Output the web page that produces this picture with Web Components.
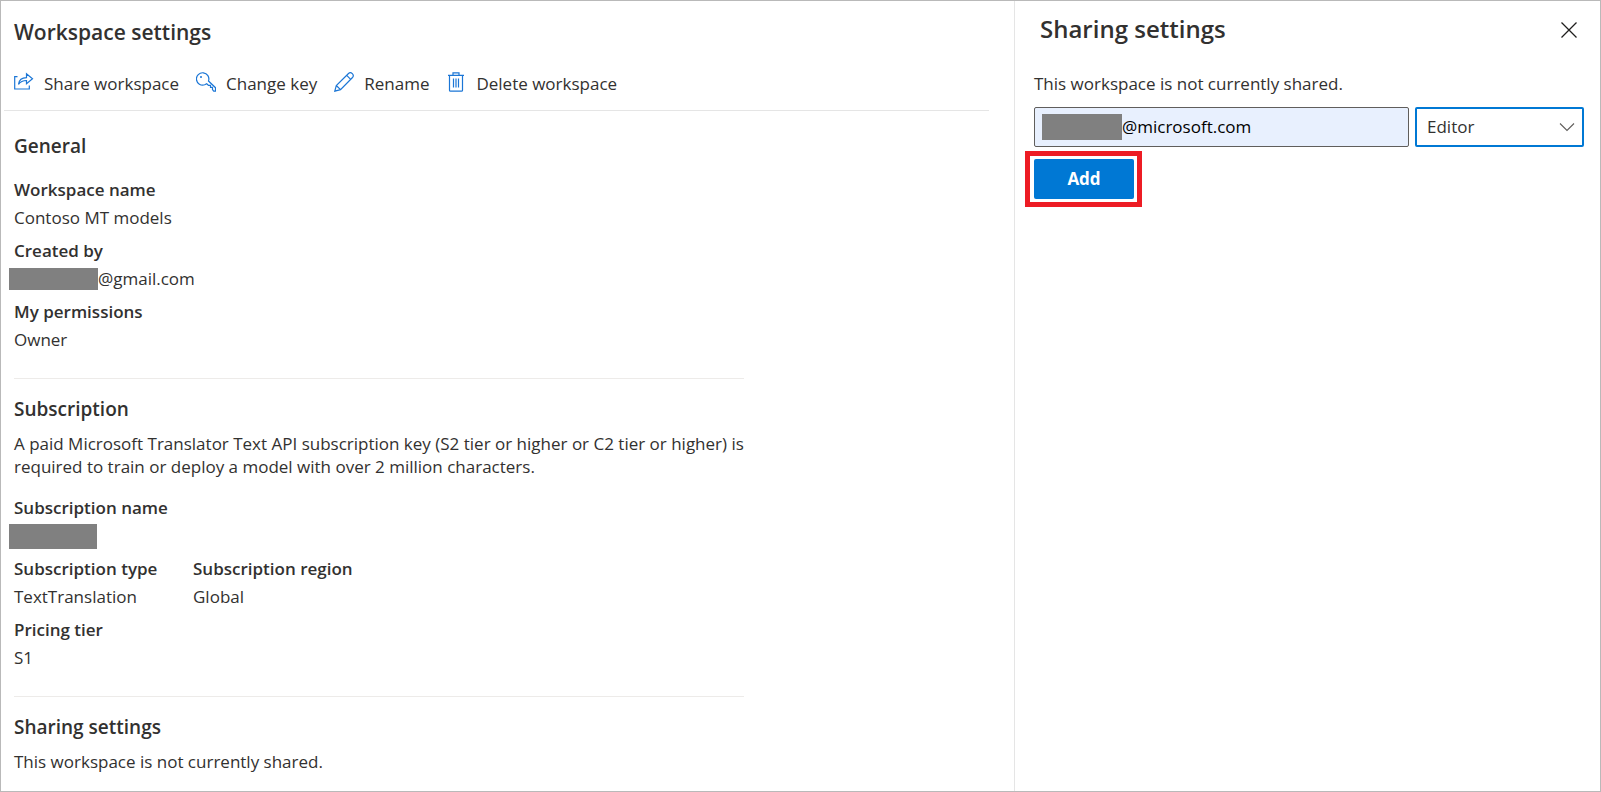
<!DOCTYPE html>
<html lang="en">
<head>
<meta charset="utf-8">
<title>Workspace settings</title>
<style>
html, body { margin: 0; height: 100%; }
body { font: 17px/24px "Open Sans", "Noto Sans", sans-serif; color: #323130; background: #fff; }
</style>
</head>
<body>
<settings-page>
  <workspace-settings slot="main"></workspace-settings>
  <sharing-panel slot="side"></sharing-panel>
</settings-page>

<script>
const define = (name, html) => {
  const template = document.createElement('template');
  template.innerHTML = html;
  customElements.define(name, class extends HTMLElement {
    constructor() {
      super();
      this.attachShadow({ mode: 'open' }).append(template.content.cloneNode(true));
    }
  });
};

define('settings-page', `
<style>
:host { display: grid; grid-template-columns: minmax(0, 1fr) 586px; min-height: 100%; box-sizing: border-box; border: 1px solid #b9b9b9; }
</style>
<slot name="main"></slot>
<slot name="side"></slot>`);

define('command-button', `
<style>
:host { display: block; }
button { display: flex; align-items: flex-start; gap: 10px; margin: 0; padding: 0; border: 0; background: none; font: inherit; line-height: 28px; color: inherit; white-space: nowrap; cursor: pointer; }
::slotted(svg) { width: 20px; height: 20px; margin-top: 2px; flex: none; fill: none; stroke: #1b76d6; stroke-width: 1.2; }
</style>
<button type="button"><slot name="icon"></slot><slot></slot></button>`);

define('redacted-block', `
<style>
:host { display: block; flex: none; background: #808080; }
</style>`);

define('info-field', `
<style>
:host { display: block; margin-bottom: 5px; }
dl, dd { margin: 0; }
dt { font-weight: 600; line-height: 28px; }
dd { display: flex; align-items: center; height: 28px; line-height: 28px; }
</style>
<dl><dt><slot name="label"></slot></dt><dd><slot></slot></dd></dl>`);

define('settings-section', `
<style>
:host { display: block; max-width: 730px; padding-bottom: 19px; margin-bottom: 16px; border-bottom: 1px solid #edebe9; }
:host(:last-of-type) { border-bottom: 0; padding: 0; margin: 0; }
h2 { margin: 0; font-size: 19px; line-height: 28px; font-weight: 600; }
</style>
<h2><slot name="title"></slot></h2>
<slot></slot>`);

define('workspace-settings', `
<style>
:host { display: block; padding: 16px 25px 8px 3px; }
h1 { margin: 0 10px; font-size: 21px; line-height: 30px; font-weight: 600; }
nav { display: flex; gap: 17px; padding: 23px 10px 12px; border-bottom: 1px solid #e5e5e5; }
main { padding: 21px 10px 0; }
p { margin: 9px 0 0; line-height: 23px; }
.fields { margin-top: 16px; }
.pair { display: grid; grid-template-columns: 179px 1fr; }
redacted-block { margin-left: -5px; width: 88px; height: 25px; }
redacted-block.user { width: 89px; height: 22px; }
</style>
<h1>Workspace settings</h1>
<nav>
  <command-button>
    <svg slot="icon" viewBox="0 0 20 20"><path d="M3.500 4.700H.7v12.300h14.600v-3.500M4.500 12.300c.500-4 3.500-6.700 8-6.700V1.700l6 5-6 5V8.500c-3.500 0-6 1-8 3.800z"/></svg>
    Share workspace
  </command-button>
  <command-button>
    <svg slot="icon" viewBox="0 0 20 20"><path d="M10.700 11.700 12.500 13.400h2v2h2v2.200l1.200 1.600h1.800v-3.500l-7-6.700a6.200 6.200 0 1 0-3.800 3.800z"/><circle cx="5" cy="5" r="1" fill="#1b76d6" stroke="none"/></svg>
    Change key
  </command-button>
  <command-button>
    <svg slot="icon" viewBox="0 0 20 20"><path d="M.8 19.200 2.300 13.500 14.500 1.500c2.500-2.300 6.300 1.500 4 4L6.500 17.700zM2.300 13.500l4.200 4.200M12.700 3.300l4 4"/></svg>
    Rename
  </command-button>
  <command-button>
    <svg slot="icon" viewBox="0 0 20 20"><path d="M2 3.300h16M7 3V.8h6V3M3.500 3.500v14.700q0 1 1 1h11q1 0 1-1V3.500M7.500 6.500v9M10 6.500v9M12.500 6.500v9"/></svg>
    Delete workspace
  </command-button>
</nav>
<main>
  <settings-section>
    <span slot="title">General</span>
    <div class="fields">
      <info-field><span slot="label">Workspace name</span>Contoso MT models</info-field>
      <info-field><span slot="label">Created by</span><redacted-block class="user"></redacted-block>@gmail.com</info-field>
      <info-field><span slot="label">My permissions</span>Owner</info-field>
    </div>
  </settings-section>
  <settings-section>
    <span slot="title">Subscription</span>
    <p>A paid Microsoft Translator Text API subscription key (S2 tier or higher or C2 tier or higher) is required to train or deploy a model with over 2 million characters.</p>
    <div class="fields">
      <info-field><span slot="label">Subscription name</span><redacted-block></redacted-block></info-field>
      <div class="pair">
        <info-field><span slot="label">Subscription type</span>TextTranslation</info-field>
        <info-field><span slot="label">Subscription region</span>Global</info-field>
      </div>
      <info-field><span slot="label">Pricing tier</span>S1</info-field>
    </div>
  </settings-section>
  <settings-section>
    <span slot="title">Sharing settings</span>
    <p>This workspace is not currently shared.</p>
  </settings-section>
</main>`);

define('sharing-panel', `
<style>
:host { display: block; border-left: 1px solid #e5e5e5; padding: 12px 16px 0 19px; }
header { display: flex; justify-content: space-between; align-items: center; padding: 0 6px; }
h2 { margin: 0; font-size: 24px; line-height: 32px; font-weight: 600; }
.close { display: flex; margin: 0; padding: 2px 0 0; border: 0; background: none; color: #201f1e; cursor: pointer; }
svg { fill: none; stroke: currentColor; }
p { margin: 27px 0 11px; }
form { display: grid; grid-template-columns: 1fr 169px; gap: 12px 6px; }
.email { display: flex; align-items: center; box-sizing: border-box; height: 40px; padding: 0 7px; border: 1px solid #605e5c; border-radius: 2px; background: #e8f0fe; }
redacted-block { width: 80px; height: 26px; }
input { flex: 1; min-width: 0; margin: 0; padding: 0; border: 0; outline: 0; background: none; font: inherit; color: #000; }
.role { display: grid; align-items: center; }
.role > * { grid-area: 1 / 1; }
.role svg { justify-self: end; margin-right: 9px; pointer-events: none; color: #605e5c; }
select { appearance: none; box-sizing: border-box; width: 100%; height: 40px; margin: 0; padding: 0 10px; border: 2px solid #0078d4; border-radius: 2px; background: #fff; font: inherit; color: #323130; }
.callout { justify-self: start; margin: -8px -9px; padding: 3px 3px 3px 4px; border: 5px solid #ed1c24; }
.add { display: block; width: 100px; height: 40px; margin: 0; padding: 0; border: 0; border-radius: 2px; background: #0078d4; font: inherit; font-weight: 700; color: #fff; cursor: pointer; }
</style>
<header>
  <h2>Sharing settings</h2>
  <button class="close" type="button" aria-label="Close"><svg width="18" height="18" viewBox="0 0 18 18" stroke-width="1.3"><path d="M1.500 1.500l15 15M16.500 1.500l-15 15"/></svg></button>
</header>
<p>This workspace is not currently shared.</p>
<form>
  <div class="email"><redacted-block></redacted-block><input type="text" aria-label="Email address" value="@microsoft.com"></div>
  <div class="role">
    <select aria-label="Role"><option>Editor</option><option>Reader</option><option>Owner</option></select>
    <svg width="16" height="10" viewBox="0 0 16 10" stroke-width="1.100"><path d="M1 1.500l7 7 7-7"/></svg>
  </div>
  <div class="callout"><button class="add" type="button">Add</button></div>
</form>`);
</script>
</body>
</html>
